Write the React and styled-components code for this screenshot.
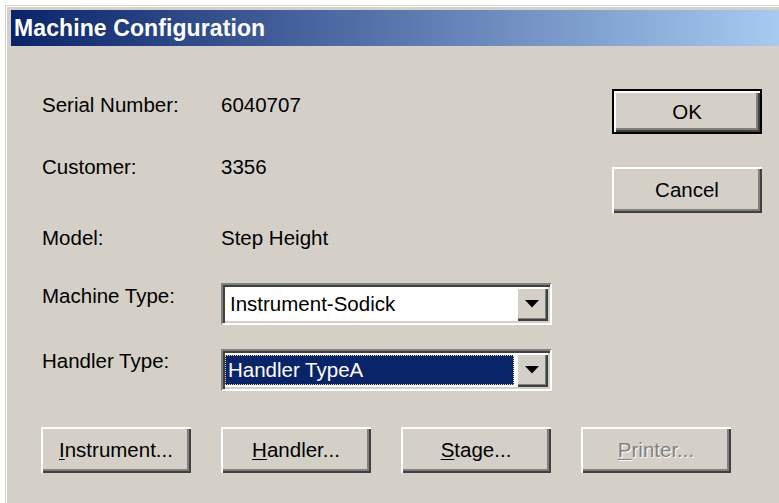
import React from "react";
import styled, { createGlobalStyle } from "styled-components";

const Global = createGlobalStyle`
  html, body {
    margin: 0;
    padding: 0;
    background: #ffffff;
    overflow: hidden;
  }
  body {
    font-family: "Liberation Sans", Arial, sans-serif;
    font-size: 20.5px;
    color: #000;
  }
`;

const Screen = styled.div`
  box-sizing: border-box;
  height: 503px;
  padding: 5px 0 0 5px;
`;

const Window = styled.div`
  box-sizing: border-box;
  height: 100%;
  background: #d4d0c8;
  border-top: 1px solid #d4d0c8;
  border-left: 1px solid #d4d0c8;
  box-shadow: inset 1px 1px 0 #ffffff;
  padding: 4px 0 0 5px;
  display: flex;
  flex-direction: column;
`;

const TitleBar = styled.div`
  height: 36px;
  display: flex;
  align-items: center;
  padding-left: 3px;
  background: linear-gradient(to right, #0a246a 0%, #a6caf0 100%);
  color: #ffffff;
  font-weight: bold;
  font-size: 23px;
  letter-spacing: 0.1px;
  white-space: nowrap;
`;

const Body = styled.div`
  padding: 43px 0 0 31px;
  display: flex;
  flex-direction: column;
`;

const TopArea = styled.div`
  display: flex;
  align-items: flex-start;
`;

const Form = styled.div`
  display: grid;
  grid-template-columns: 179px 331px;
  grid-template-rows: 62px 71px 57px 66px 42px;
  align-items: start;
  padding-top: 4px;
`;

const Label = styled.div`
  line-height: 24px;
  white-space: nowrap;
  padding-top: ${(p) => p.$drop || 0}px;
`;

const Value = styled.div`
  line-height: 24px;
  white-space: nowrap;
`;

const ActionColumn = styled.div`
  margin-left: 60px;
  display: flex;
  flex-direction: column;
  gap: 33px;
`;

const Button = styled.button`
  box-sizing: border-box;
  width: 150px;
  height: ${(p) => (p.$default ? 45 : 46)}px;
  padding: 0;
  margin: 0;
  background: #d4d0c8;
  font-family: "Liberation Sans", Arial, sans-serif;
  font-size: 20.5px;
  color: ${(p) => (p.disabled ? "#808080" : "#000")};
  text-shadow: ${(p) => (p.disabled ? "1px 1px 0 #ffffff" : "none")};
  border: ${(p) => (p.$default ? "2px solid #000" : "none")};
  box-shadow: inset 2px 2px 0 #ffffff, inset -2px -2px 0 #404040,
    inset -4px -4px 0 #808080;
  display: flex;
  align-items: center;
  justify-content: center;
  cursor: default;

  u {
    text-decoration-thickness: 1px;
    text-underline-offset: 2px;
  }
`;

const ButtonRow = styled.div`
  display: flex;
  gap: 30px;
  margin-top: 36px;
  margin-left: -1px;
`;

const Combo = styled.div`
  box-sizing: border-box;
  width: 331px;
  height: ${(p) => p.$h}px;
  background: #ffffff;
  border: 2px solid;
  border-color: #808080 #ffffff #ffffff #808080;
  box-shadow: inset 2px 2px 0 #404040, inset -2px -2px 0 #d4d0c8;
  padding: 2px;
  display: flex;
  align-items: stretch;
`;

const ComboText = styled.div`
  flex: 1;
  display: flex;
  align-items: center;
  padding-left: 5px;
  white-space: nowrap;
  ${(p) =>
    p.$selected &&
    `
    margin: 2px 2px 2px 0;
    padding-left: 3px;
    background: #0a246a;
    color: #ffffff;
    outline: 1px dotted #f0d890;
    outline-offset: -1px;
  `}
`;

const DropButton = styled.div`
  box-sizing: border-box;
  width: 32px;
  background: #d4d0c8;
  box-shadow: inset 2px 2px 0 #ffffff, inset -2px -2px 0 #404040,
    inset -3px -3px 0 #808080;
  display: flex;
  align-items: center;
  justify-content: center;
`;

const Arrow = () => (
  <svg width="14" height="8" viewBox="0 0 14 8">
    <polygon points="0,0 14,0 7,7.5" fill="#000" />
  </svg>
);

const ComboBox = ({ value, selected, height }) => (
  <Combo $h={height}>
    <ComboText $selected={selected}>{value}</ComboText>
    <DropButton>
      <Arrow />
    </DropButton>
  </Combo>
);

export default function App() {
  return (
    <>
      <Global />
      <Screen>
        <Window>
          <TitleBar>Machine Configuration</TitleBar>
          <Body>
            <TopArea>
              <Form>
                <Label>Serial Number:</Label>
                <Value>6040707</Value>
                <Label>Customer:</Label>
                <Value>3356</Value>
                <Label>Model:</Label>
                <Value>Step Height</Value>
                <Label $drop={1}>Machine Type:</Label>
                <ComboBox value="Instrument-Sodick" height={42} />
                <Label>Handler Type:</Label>
                <ComboBox value="Handler TypeA" selected height={42} />
              </Form>
              <ActionColumn>
                <Button $default>OK</Button>
                <Button>Cancel</Button>
              </ActionColumn>
            </TopArea>
            <ButtonRow>
              <Button>
                <u>I</u>nstrument...
              </Button>
              <Button>
                <u>H</u>andler...
              </Button>
              <Button>
                <u>S</u>tage...
              </Button>
              <Button disabled>
                <u>P</u>rinter...
              </Button>
            </ButtonRow>
          </Body>
        </Window>
      </Screen>
    </>
  );
}
